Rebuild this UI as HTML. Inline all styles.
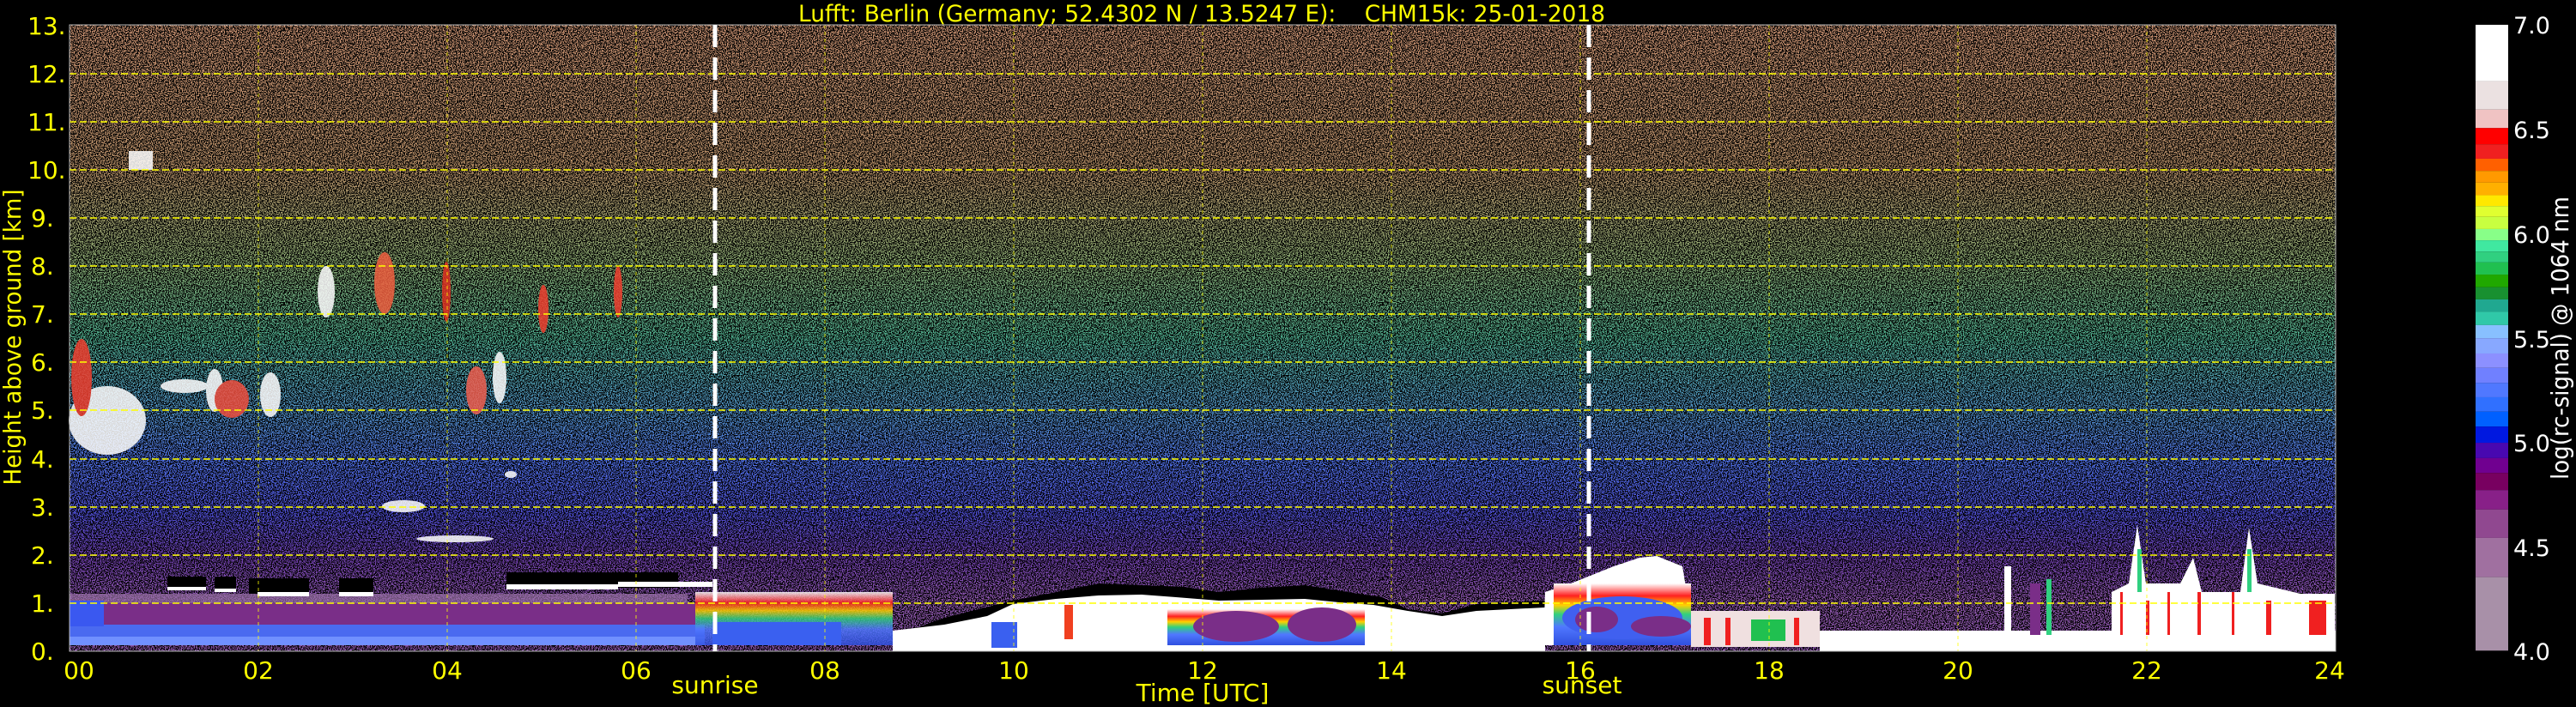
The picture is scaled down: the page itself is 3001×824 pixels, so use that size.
<!DOCTYPE html>
<html><head><meta charset="utf-8"><style>
html,body{margin:0;padding:0;background:#000;width:3001px;height:824px;overflow:hidden}
svg{display:block}
text{font-family:"DejaVu Sans","Liberation Sans",sans-serif;white-space:pre}
</style></head><body>
<svg width="3001" height="824" viewBox="0 0 3001 824" xmlns="http://www.w3.org/2000/svg">
<defs>
<linearGradient id="bg" x1="0" y1="29" x2="0" y2="759" gradientUnits="userSpaceOnUse">
<stop offset="0" stop-color="#c89070"/>
<stop offset="0.23" stop-color="#b89068"/>
<stop offset="0.38" stop-color="#88a870"/>
<stop offset="0.5" stop-color="#50b090"/>
<stop offset="0.62" stop-color="#5090c8"/>
<stop offset="0.7" stop-color="#5070e8"/>
<stop offset="0.78" stop-color="#5050d8"/>
<stop offset="0.85" stop-color="#7040b0"/>
<stop offset="0.92" stop-color="#9058b0"/>
<stop offset="1" stop-color="#9058b0"/>
</linearGradient>
<filter id="nz" x="0" y="0" width="100%" height="100%">
<feTurbulence type="fractalNoise" baseFrequency="0.8" numOctaves="1" seed="3"/>
<feColorMatrix type="matrix" values="0 0 0 0 0  0 0 0 0 0  0 0 0 0 0  30 0 0 0 -14.3"/>
</filter>
<linearGradient id="rb" x1="0" y1="0" x2="0" y2="1">
<stop offset="0" stop-color="#fff"/><stop offset="0.2" stop-color="#ff2020"/><stop offset="0.35" stop-color="#ffd000"/><stop offset="0.5" stop-color="#30d080"/><stop offset="0.7" stop-color="#5078ff"/><stop offset="1" stop-color="#3050e0"/>
</linearGradient>
</defs>

<rect x="81" y="29" width="2640" height="730" fill="url(#bg)"/>
<rect x="81" y="29" width="2640" height="730" fill="#000" filter="url(#nz)"/>

<!-- upper clouds -->
<g fill="#fff" opacity="0.85">
<ellipse cx="125" cy="490" rx="45" ry="40"/>
<ellipse cx="95" cy="440" rx="12" ry="45" fill="#f04030"/>
<rect x="150" y="176" width="28" height="22"/>
<ellipse cx="250" cy="455" rx="10" ry="25"/>
<ellipse cx="215" cy="450" rx="28" ry="8"/>
<ellipse cx="270" cy="465" rx="20" ry="22" fill="#f05040"/>
<ellipse cx="315" cy="460" rx="12" ry="26"/>
<ellipse cx="380" cy="340" rx="10" ry="30"/>
<ellipse cx="448" cy="330" rx="12" ry="36" fill="#f06040"/>
<ellipse cx="520" cy="340" rx="5" ry="35" fill="#e03020"/>
<ellipse cx="555" cy="455" rx="12" ry="28" fill="#f06050"/>
<ellipse cx="582" cy="440" rx="8" ry="30"/>
<ellipse cx="633" cy="360" rx="6" ry="28" fill="#f04030"/>
<ellipse cx="470" cy="590" rx="25" ry="7"/>
<ellipse cx="530" cy="628" rx="45" ry="4"/>
<ellipse cx="720" cy="340" rx="5" ry="30" fill="#f04030"/>
<ellipse cx="595" cy="553" rx="7" ry="4"/>
</g>

<!-- left boundary layer -->
<rect x="81" y="692" width="720" height="14" fill="#9a70a8" opacity="0.7"/>
<rect x="81" y="703" width="730" height="30" fill="#7a2e88"/>
<rect x="81" y="728" width="740" height="24" fill="#4a6af0"/>
<rect x="81" y="700" width="40" height="30" fill="#3a58f0"/>
<rect x="81" y="742" width="740" height="10" fill="#7090ff"/>
<g fill="#000">
<rect x="195" y="672" width="45" height="14"/><rect x="250" y="672" width="25" height="14"/><rect x="290" y="674" width="70" height="18"/><rect x="395" y="674" width="40" height="18"/><rect x="590" y="667" width="200" height="18"/>
</g>
<g fill="#fff">
<rect x="195" y="684" width="45" height="4"/><rect x="250" y="686" width="25" height="4"/><rect x="300" y="690" width="60" height="5"/><rect x="395" y="690" width="40" height="5"/><rect x="590" y="681" width="130" height="6"/><rect x="720" y="678" width="110" height="6"/>
</g>
<rect x="810" y="690" width="230" height="62" fill="url(#rb)" opacity="0.85"/>
<rect x="830" y="725" width="150" height="27" fill="#3a60f0"/>
<polygon fill="#000" points="1040,742 1100,720 1180,700 1230,690 1280,680 1330,682 1380,684 1420,690 1470,685 1520,682 1570,690 1610,696 1640,710 1680,715 1720,704 1800,700 1800,752 1040,752"/>
<polygon fill="#fff" points="1040,752 1040,735 1100,728 1150,718 1180,704 1230,698 1280,694 1330,693 1370,696 1420,700 1470,699 1520,698 1560,702 1600,705 1640,712 1680,718 1720,712 1800,708 1800,759 1040,759"/>
<rect x="1360" y="710" width="230" height="42" fill="url(#rb)"/>
<ellipse cx="1440" cy="730" rx="50" ry="18" fill="#7a2e88"/>
<ellipse cx="1540" cy="728" rx="40" ry="20" fill="#7a2e88"/>
<rect x="1155" y="725" width="30" height="30" fill="#3a60f0"/>
<rect x="1240" y="705" width="10" height="40" fill="#f04020"/>
<polygon fill="#fff" points="1798,752 1800,690 1830,680 1880,660 1910,650 1930,648 1960,660 1965,690 1970,752"/>
<rect x="1810" y="680" width="160" height="72" fill="url(#rb)"/>
<ellipse cx="1890" cy="720" rx="70" ry="25" fill="#4060f0"/>
<ellipse cx="1860" cy="722" rx="25" ry="15" fill="#7a2e88"/>
<ellipse cx="1935" cy="730" rx="35" ry="12" fill="#7a2e88"/>
<rect x="1970" y="712" width="150" height="42" fill="#f0e0e0"/>
<rect x="2040" y="722" width="40" height="25" fill="#20c050"/>
<rect x="1985" y="720" width="8" height="32" fill="#f02020"/><rect x="2010" y="720" width="6" height="32" fill="#f02020"/><rect x="2090" y="720" width="6" height="32" fill="#f02020"/>
<rect x="2120" y="735" width="601" height="24" fill="#fff"/>
<rect x="2335" y="660" width="8" height="80" fill="#fff"/>
<rect x="2365" y="680" width="12" height="60" fill="#7a2e88"/>
<rect x="2384" y="675" width="6" height="65" fill="#30d080"/>
<polygon fill="#fff" points="2460,740 2460,690 2480,680 2490,612 2500,680 2540,680 2555,650 2565,690 2610,690 2620,615 2630,680 2680,692 2720,692 2720,740"/>
<g fill="#f02020">
<rect x="2470" y="690" width="3" height="50"/><rect x="2500" y="700" width="4" height="40"/><rect x="2525" y="690" width="3" height="50"/><rect x="2560" y="690" width="4" height="50"/><rect x="2600" y="690" width="3" height="50"/><rect x="2640" y="700" width="6" height="40"/><rect x="2690" y="700" width="20" height="40"/>
</g>
<rect x="2490" y="640" width="5" height="50" fill="#30d080"/><rect x="2618" y="640" width="5" height="50" fill="#30d080"/>

<g stroke="#ffff00" stroke-width="1.5" stroke-dasharray="8,4" fill="none">
<path d="M81 703H2721M81 647H2721M81 591H2721M81 535H2721M81 478H2721M81 422H2721M81 366H2721M81 310H2721M81 254H2721M81 198H2721M81 142H2721M81 86H2721"/>
</g>
<g stroke="#ffff00" stroke-width="1" stroke-dasharray="4,4" fill="none" opacity="0.8">
<path d="M301 29V759M521 29V759M741 29V759M961 29V759M1181 29V759M1401 29V759M1621 29V759M1841 29V759M2061 29V759M2281 29V759M2501 29V759"/>
</g>
<rect x="81" y="29" width="2640" height="730" fill="none" stroke="#bbb" stroke-width="1"/>
<g stroke="#fff" stroke-width="5" stroke-dasharray="26,12">
<path d="M833 29V759M1851 29V759"/>
</g>

<g transform="translate(2884,0) scale(1,0.5255)">
<rect y="55" width="38" height="125" fill="#fff"/>
<rect y="180" width="38" height="63" fill="#ebe1e1"/>
<rect y="243" width="38" height="41" fill="#f0c3c3"/>
<rect y="284" width="38" height="36" fill="#ff0000"/>
<rect y="320" width="38" height="32" fill="#f02020"/>
<rect y="352" width="38" height="27" fill="#ff6000"/>
<rect y="379" width="38" height="26" fill="#ff9900"/>
<rect y="405" width="38" height="28" fill="#ffb000"/>
<rect y="433" width="38" height="24" fill="#ffe800"/>
<rect y="457" width="38" height="24" fill="#e0ff30"/>
<rect y="481" width="38" height="27" fill="#c8ff40"/>
<rect y="508" width="38" height="25" fill="#88ff88"/>
<rect y="533" width="38" height="25" fill="#40e8a0"/>
<rect y="558" width="38" height="24" fill="#30d080"/>
<rect y="582" width="38" height="27" fill="#20c050"/>
<rect y="609" width="38" height="28" fill="#20a800"/>
<rect y="637" width="38" height="27" fill="#189030"/>
<rect y="664" width="38" height="27" fill="#20a890"/>
<rect y="691" width="38" height="30" fill="#30c8a8"/>
<rect y="721" width="38" height="29" fill="#88c0ff"/>
<rect y="750" width="38" height="34" fill="#88a8ff"/>
<rect y="784" width="38" height="32" fill="#8c90ff"/>
<rect y="816" width="38" height="33" fill="#7080ff"/>
<rect y="849" width="38" height="32" fill="#5078ff"/>
<rect y="881" width="38" height="32" fill="#3070ff"/>
<rect y="913" width="38" height="33" fill="#0060ff"/>
<rect y="946" width="38" height="36" fill="#0018e0"/>
<rect y="982" width="38" height="34" fill="#4808b0"/>
<rect y="1016" width="38" height="33" fill="#700090"/>
<rect y="1049" width="38" height="38" fill="#780060"/>
<rect y="1087" width="38" height="43" fill="#882088"/>
<rect y="1130" width="38" height="63" fill="#904890"/>
<rect y="1193" width="38" height="87" fill="#a070a0"/>
<rect y="1280" width="38" height="163" fill="#a890a8"/>
</g>
<g fill="#fff" font-size="27">
<text x="2928" y="39">7.0</text>
<text x="2928" y="161">6.5</text>
<text x="2928" y="283">6.0</text>
<text x="2928" y="405">5.5</text>
<text x="2928" y="526">5.0</text>
<text x="2928" y="648">4.5</text>
<text x="2928" y="769">4.0</text>
<text transform="translate(2992,394) rotate(-90)" text-anchor="middle" font-size="28" textLength="330" lengthAdjust="spacingAndGlyphs">log(rc-signal) @ 1064 nm</text>
</g>

<g fill="#ffff00" font-size="28">
<text x="36" y="769">0.</text><text x="36" y="713">1.</text><text x="36" y="657">2.</text><text x="36" y="601">3.</text><text x="36" y="545">4.</text><text x="36" y="488">5.</text><text x="36" y="432">6.</text><text x="36" y="376">7.</text><text x="36" y="320">8.</text><text x="36" y="264">9.</text><text x="32" y="208">10.</text><text x="32" y="152">11.</text><text x="32" y="96">12.</text><text x="32" y="40">13.</text>
<g text-anchor="middle">
<text x="92" y="791">00</text><text x="301" y="791">02</text><text x="521" y="791">04</text><text x="741" y="791">06</text><text x="961" y="791">08</text><text x="1181" y="791">10</text><text x="1401" y="791">12</text><text x="1621" y="791">14</text><text x="1841" y="791">16</text><text x="2061" y="791">18</text><text x="2281" y="791">20</text><text x="2501" y="791">22</text><text x="2714" y="791">24</text>
<text x="833" y="808">sunrise</text><text x="1843" y="808">sunset</text>
<text x="1401" y="817">Time [UTC]</text>
<text transform="translate(24,393) rotate(-90)" textLength="345" lengthAdjust="spacingAndGlyphs">Height above ground [km]</text>
<text x="1400" y="25" font-size="27" textLength="940" lengthAdjust="spacingAndGlyphs">Lufft: Berlin (Germany; 52.4302 N / 13.5247 E):&#160;&#160;&#160;&#160;CHM15k: 25-01-2018</text>
</g>
</g>
</svg>
</body></html>
